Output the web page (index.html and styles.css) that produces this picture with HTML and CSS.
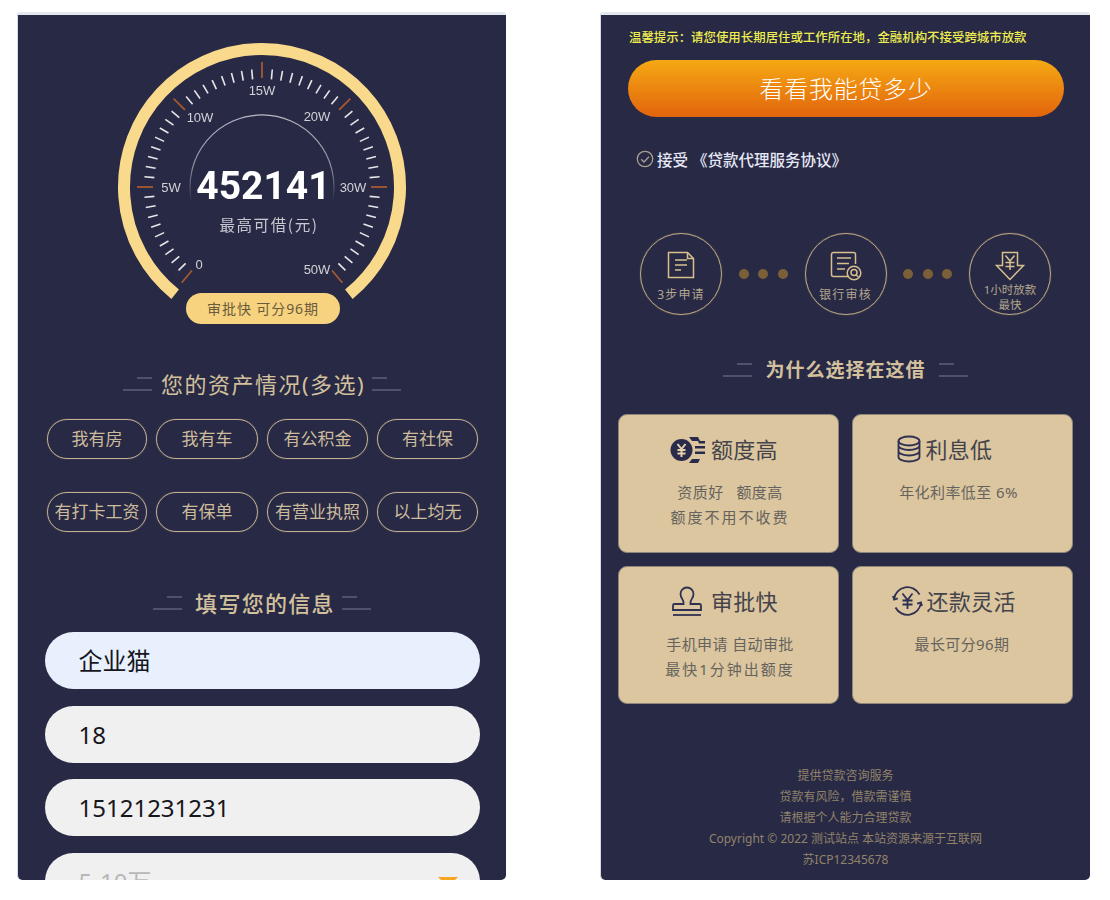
FILE: index.html
```html
<!DOCTYPE html>
<html lang="zh-CN">
<head>
<meta charset="utf-8">
<title>贷款申请</title>
<link rel="stylesheet" href="styles.css">
</head>
<body>
<main class="page">
  <section class="panel panel-left">
    <div class="gauge">
      <svg class="gauge-svg" width="320" height="300" viewBox="0 0 320 300">
        <defs>
          <linearGradient id="fade" gradientUnits="userSpaceOnUse" x1="0" y1="85" x2="0" y2="172">
            <stop offset="0" stop-color="#b9bac4"/>
            <stop offset="0.6" stop-color="#8d8e9c"/>
            <stop offset="1" stop-color="#282945"/>
          </linearGradient>
          <line id="m" class="tick" x1="0" y1="-118" x2="0" y2="-108"/>
          <line id="j" class="tick-major" x1="0" y1="-125" x2="0" y2="-109"/>
        </defs>
        <path class="rim" d="M73.15 264.25A138 138 0 1 1 246.85 264.25"/>
        <path class="inner-arc" d="M89.1 169.5A72 72 0 1 1 230.9 169.5"/>
        <g transform="translate(160 157)">
          <use href="#j" transform="rotate(-140)"/><use href="#m" transform="rotate(-135)"/><use href="#m" transform="rotate(-130)"/><use href="#m" transform="rotate(-125)"/><use href="#m" transform="rotate(-120)"/><use href="#m" transform="rotate(-115)"/><use href="#m" transform="rotate(-110)"/><use href="#m" transform="rotate(-105)"/><use href="#m" transform="rotate(-100)"/><use href="#m" transform="rotate(-95)"/>
          <use href="#j" transform="rotate(-90)"/><use href="#m" transform="rotate(-85)"/><use href="#m" transform="rotate(-80)"/><use href="#m" transform="rotate(-75)"/><use href="#m" transform="rotate(-70)"/><use href="#m" transform="rotate(-65)"/><use href="#m" transform="rotate(-60)"/><use href="#m" transform="rotate(-55)"/><use href="#m" transform="rotate(-50)"/>
          <use href="#j" transform="rotate(-45)"/><use href="#m" transform="rotate(-40)"/><use href="#m" transform="rotate(-35)"/><use href="#m" transform="rotate(-30)"/><use href="#m" transform="rotate(-25)"/><use href="#m" transform="rotate(-20)"/><use href="#m" transform="rotate(-15)"/><use href="#m" transform="rotate(-10)"/><use href="#m" transform="rotate(-5)"/>
          <use href="#j"/><use href="#m" transform="rotate(5)"/><use href="#m" transform="rotate(10)"/><use href="#m" transform="rotate(15)"/><use href="#m" transform="rotate(20)"/><use href="#m" transform="rotate(25)"/><use href="#m" transform="rotate(30)"/><use href="#m" transform="rotate(35)"/><use href="#m" transform="rotate(40)"/>
          <use href="#j" transform="rotate(45)"/><use href="#m" transform="rotate(50)"/><use href="#m" transform="rotate(55)"/><use href="#m" transform="rotate(60)"/><use href="#m" transform="rotate(65)"/><use href="#m" transform="rotate(70)"/><use href="#m" transform="rotate(75)"/><use href="#m" transform="rotate(80)"/><use href="#m" transform="rotate(85)"/>
          <use href="#j" transform="rotate(90)"/><use href="#m" transform="rotate(95)"/><use href="#m" transform="rotate(100)"/><use href="#m" transform="rotate(105)"/><use href="#m" transform="rotate(110)"/><use href="#m" transform="rotate(115)"/><use href="#m" transform="rotate(120)"/><use href="#m" transform="rotate(125)"/><use href="#m" transform="rotate(130)"/><use href="#m" transform="rotate(135)"/>
          <use href="#j" transform="rotate(140)"/>
        </g>
        <text class="scale" x="160" y="65">15W</text>
        <text class="scale" x="98" y="92">10W</text>
        <text class="scale" x="215" y="91">20W</text>
        <text class="scale" x="69" y="162">5W</text>
        <text class="scale" x="251" y="162">30W</text>
        <text class="scale" x="97" y="239">0</text>
        <text class="scale" x="215" y="244">50W</text>
        <text class="amount" x="161.500" y="169">452141</text>
        <text class="amount-label" x="167" y="201">最高可借(元)</text>
      </svg>
      <div class="gauge-pill">审批快 可分96期</div>
    </div>

    <h2 class="heading heading-assets"><i class="deco deco-l"></i><span class="heading-assets-text">您的资产情况(多选)</span><i class="deco deco-r"></i></h2>
    <div class="chips">
      <div class="chip">我有房</div>
      <div class="chip">我有车</div>
      <div class="chip">有公积金</div>
      <div class="chip">有社保</div>
      <div class="chip">有打卡工资</div>
      <div class="chip">有保单</div>
      <div class="chip">有营业执照</div>
      <div class="chip">以上均无</div>
    </div>

    <h2 class="heading heading-info"><i class="deco deco-l"></i><span class="heading-info-text">填写您的信息</span><i class="deco deco-r"></i></h2>
    <div class="fields">
      <div class="field field-filled">企业猫</div>
      <div class="field">18</div>
      <div class="field">15121231231</div>
      <div class="field field-select"><span class="placeholder">5-10万</span><i class="caret"></i></div>
    </div>
  </section>

  <section class="panel panel-right">
    <p class="notice">温馨提示：请您使用长期居住或工作所在地，金融机构不接受跨城市放款</p>
    <div class="cta">看看我能贷多少</div>
    <div class="agree">
      <svg class="agree-icon" width="18" height="18" viewBox="0 0 18 18"><circle cx="9" cy="9" r="7.7"/><path d="M5.2 9.2l2.8 2.8 5-5.2"/></svg>
      <span>接受&nbsp;《贷款代理服务协议》</span>
    </div>

    <div class="steps">
      <div class="step">
        <svg class="step-icon" width="28" height="28" viewBox="0 0 28 28"><path d="M1.5 1.5h19l6 6v19h-25z"/><path d="M20.5 1.5v6h6"/><path d="M8 9h12M8 14h12M8 19h6"/></svg>
        <span class="step-text step-text-one">3步申请</span>
      </div>
      <div class="dots"><i></i><i></i><i></i></div>
      <div class="step">
        <svg class="step-icon step-icon-search" width="32" height="30" viewBox="0 0 32 30"><path d="M19 25.5H3.500a2 2 0 0 1-2-2V3.500a2 2 0 0 1 2-2h20a2 2 0 0 1 2 2V13"/><path d="M7 7h14M7 12.500h12M7 18h8"/><circle cx="24" cy="22" r="6.800"/><circle cx="24" cy="21.500" r="3"/><path d="M26 24l2.500 2"/></svg>
        <span class="step-text step-text-two">银行审核</span>
      </div>
      <div class="dots"><i></i><i></i><i></i></div>
      <div class="step">
        <svg class="step-icon step-icon-arrow" width="30" height="30" viewBox="0 0 30 30"><path d="M7.500 1.500h15v13h6L15 28.500 1.500 14.500h6z"/><path d="M10.500 4.500l4.500 5.500 4.500-5.500M15 10v9M10.500 11.500h9M10.500 15.500h9"/></svg>
        <span class="step-text step-text-small">1小时放款<br>最快</span>
      </div>
    </div>

    <h2 class="heading heading-why"><i class="deco deco-l"></i><span>为什么选择在这借</span><i class="deco deco-r"></i></h2>

    <div class="cards">
      <article class="card">
        <div class="card-title title-limit">
          <svg class="card-icon" width="36" height="28" viewBox="0 0 36 28"><circle class="solid" cx="11.500" cy="14" r="11"/><path class="coin-mark" d="M7.500 8l4 5 4-5M11.500 13v8M7.500 14h8M7.500 17.500h8"/><path class="solid" d="M19 1h9l2 4h-8zM25 10h10v2.500H25zM25 15.500h10V18H25zM22 23h8l-2 4h-9zM28 5h7v2.500h-6z"/></svg>
          <span>额度高</span>
        </div>
        <p class="card-text card-text-right">资质好&nbsp;&nbsp;&nbsp;额度高<br><span class="line-wide">额度不用不收费</span></p>
      </article>
      <article class="card">
        <div class="card-title title-rate">
          <svg class="card-icon card-icon-line" width="24" height="30" viewBox="0 0 24 30"><ellipse cx="12" cy="6" rx="10.500" ry="4.500"/><path d="M1.500 6v4.500c0 2.500 4.700 4.500 10.500 4.500s10.500-2 10.500-4.500V6M1.500 10.500V16c0 2.500 4.700 4.500 10.500 4.500s10.500-2 10.500-4.500v-5.500M1.500 16v6c0 2.500 4.700 4.500 10.500 4.500s10.500-2 10.500-4.500v-6"/></svg>
          <span>利息低</span>
        </div>
        <p class="card-text card-text-left">年化利率低至 6%</p>
      </article>
      <article class="card">
        <div class="card-title title-approve">
          <svg class="card-icon card-icon-line" width="30" height="31" viewBox="0 0 30 31"><path d="M11.500 16.500c0-3-3-4.500-3-8.500a6.500 6.500 0 0 1 13 0c0 4-3 5.500-3 8.500v1.500h9c.8 0 1.500.7 1.500 1.500v4.500H1v-4.500c0-.8.700-1.500 1.500-1.500h9z"/><path d="M1 29h28"/></svg>
          <span>审批快</span>
        </div>
        <p class="card-text card-text-right">手机申请 自动审批<br><span class="line-wide">最快1分钟出额度</span></p>
      </article>
      <article class="card">
        <div class="card-title title-repay">
          <svg class="card-icon card-icon-line" width="31" height="30" viewBox="0 0 31 30"><path d="M2.100 13A13.500 13.500 0 0 1 27.500 8.500M28.900 17A13.500 13.500 0 0 1 3.500 21.500"/><path d="M1 10l1.100 3.500 3.700-1.200M30 20l-1.100-3.500-3.700 1.200"/><path d="M10.500 7.500l5 6.500 5-6.500M15.500 14v9M10.500 14.500h10M10.500 18.500h10"/></svg>
          <span>还款灵活</span>
        </div>
        <p class="card-text">最长可分96期</p>
      </article>
    </div>

    <footer class="footer">
      <p>提供贷款咨询服务</p>
      <p>贷款有风险，借款需谨慎</p>
      <p>请根据个人能力合理贷款</p>
      <p>Copyright © 2022 测试站点 本站资源来源于互联网</p>
      <p>苏ICP12345678</p>
    </footer>
  </section>
</main>
</body>
</html>
```
FILE: styles.css
```css
* { box-sizing: border-box; }
html, body { margin: 0; padding: 0; background: #fff; }
body { height: 900px; overflow: hidden; font-family: "Noto Sans", "Noto Sans CJK SC", sans-serif; }
p, h2 { margin: 0; }
i { font-style: normal; }

.page { display: flex; gap: 94px; padding: 12px 0 0 17px; height: 880px; }
.panel {
  height: 868px;
  overflow: hidden;
  background: #282945;
  border-top: 3px solid #e3e7f0;
  border-left: 1px solid #d5dbe6;
  border-radius: 3px 3px 5px 5px;
}
.panel-left { width: 489px; }
.panel-right { width: 490px; }

/* gauge */
.gauge { position: relative; height: 310px; padding-top: 15px; }
.gauge-svg { display: block; margin: 0 auto; filter: blur(.35px); }
.rim { fill: none; stroke: #f9d98b; stroke-width: 12; }
.inner-arc { fill: none; stroke: url(#fade); stroke-width: 1.2; }
.tick { stroke: #e6e6ea; stroke-width: 1.6; }
.tick-major { stroke: #a5592f; stroke-width: 1.8; }
.scale { fill: #d2d2d8; font: 13px "Liberation Sans", sans-serif; text-anchor: middle; }
.amount { fill: #fff; font: 700 39px Roboto, sans-serif; text-anchor: middle; }
.amount-label { fill: #c8c8d0; font: 15.500px "Noto Sans CJK SC", sans-serif; letter-spacing: 1.600px; text-anchor: middle; }
.gauge-pill {
  position: absolute;
  left: 168px;
  top: 278px;
  width: 154px;
  height: 31px;
  line-height: 31px;
  border-radius: 16px;
  text-align: center;
  font-size: 14px;
  letter-spacing: .9px;
  color: #6a5b3c;
  background: #f7d27f;
}

/* headings */
.heading {
  display: flex;
  align-items: center;
  justify-content: center;
  height: 30px;
  font-size: 22px;
  font-weight: 500;
  letter-spacing: 1px;
  line-height: 30px;
  color: #d3c09c;
}
.heading-assets { gap: 9px; margin-top: 44px; font-weight: 400; letter-spacing: 1.500px; }
.heading-assets-text { margin-right: -2px; }
.heading-info { gap: 8px; margin-top: 56px; letter-spacing: 1.300px; }
.heading-info-text { margin: 0 -1px 0 5px; }
.heading-why { gap: 13px; margin-top: 40px; font-size: 19px; font-weight: 700; }
.deco { position: relative; display: block; width: 29px; height: 14px; border-bottom: 2px solid #50516a; }
.deco::before { content: ""; position: absolute; top: 0; width: 15px; height: 2px; background: #50516a; }
.deco-l::before { right: 0; }
.deco-r::before { left: 0; }

/* chips */
.chips {
  display: grid;
  grid-template-columns: 100px 102px 101px 101px;
  column-gap: 9px;
  row-gap: 33px;
  margin: 20px 0 0 29px;
}
.chip {
  height: 40px;
  line-height: 37px;
  text-align: center;
  font-size: 17px;
  color: #cdbc9c;
  border: 1px solid #c4b294;
  box-shadow: 0 0 1px #a39379;
  border-radius: 20px;
  white-space: nowrap;
}

/* form */
.fields { display: flex; flex-direction: column; gap: 16.500px; margin: 14px 0 0 26.500px; width: 435.500px; }
.field {
  position: relative;
  flex: none;
  height: 57px;
  line-height: 57px;
  padding-left: 34px;
  font-size: 24px;
  color: #16161c;
  background: #f0f0f0;
  border-radius: 28.500px;
}
.field-filled { background: #e8f0fe; }
.placeholder { color: #b8b8b8; }
.caret {
  position: absolute;
  right: 22px;
  top: 24px;
  border-style: solid;
  border-width: 10px 10px 0;
  border-color: #f5a623 transparent transparent;
}

/* right panel */
.notice {
  margin: 13px 0 0 28px;
  font-size: 12.430px;
  line-height: 20px;
  font-weight: 500;
  color: #eeee50;
  white-space: nowrap;
}
.cta {
  width: 436px;
  height: 57px;
  margin: 12px 0 0 27px;
  border-radius: 28.500px;
  background: linear-gradient(#f5a913, #e2640d);
  color: #fff;
  font-size: 24px;
  letter-spacing: .7px;
  line-height: 57px;
  text-align: center;
  font-weight: 300;
}
.agree {
  display: flex;
  align-items: center;
  gap: 3px;
  height: 24px;
  margin: 30px 0 0 35px;
  font-size: 15.500px;
  font-weight: 500;
  color: #e6e8f5;
}
.agree-icon { fill: none; stroke: #a89f90; stroke-width: 1.300; }

.steps {
  display: flex;
  align-items: center;
  width: 411px;
  margin: 62px 0 0 39px;
}
.step {
  display: flex;
  flex: none;
  flex-direction: column;
  align-items: center;
  width: 82px;
  height: 82px;
  padding-top: 17px;
  border: 1px solid #c0aa84;
  box-shadow: 0 0 1px #a3906f;
  border-radius: 50%;
}
.step-icon { flex: none; fill: none; stroke: #d8c08e; stroke-width: 1.500; }
.step-icon-search { margin-left: 1px; }
.step-text { font-size: 12px; line-height: 16px; letter-spacing: 1.200px; color: #b2a68f; white-space: nowrap; text-align: center; }
.step-text-one { margin-top: 8px; }
.step-text-two { margin-top: 6px; }
.step-text-small { margin-top: 1px; font-size: 11.500px; line-height: 15px; letter-spacing: 0; }
.dots { flex: 1; display: flex; justify-content: center; gap: 9.500px; }
.dots i { width: 10px; height: 10px; border-radius: 50%; background: #7a5f38; }

.cards {
  display: grid;
  grid-template-columns: 221px 221px;
  grid-auto-rows: 138.500px;
  column-gap: 12.500px;
  row-gap: 13px;
  margin: 29px 0 0 17px;
}
.card {
  background: #dbc6a0;
  border: 1px solid #8e8578;
  border-radius: 9px;
  padding-top: 18px;
  color: #5c5a56;
}
.card-title { display: flex; align-items: center; gap: 6px; height: 33px; font-size: 22px; letter-spacing: .3px; color: #44434a; line-height: 33px; white-space: nowrap; }
.title-limit { padding-left: 51px; gap: 5px; }
.title-rate { padding-left: 44px; gap: 5px; }
.title-approve { padding-left: 53px; gap: 9px; }
.title-repay { padding-left: 39px; gap: 4px; }
.card-icon { flex: none; }
.card-icon-line { fill: none; stroke: #2f3052; stroke-width: 1.800; }
.solid { fill: #2a2b4a; }
.coin-mark { fill: none; stroke: #e5d3ae; stroke-width: 2; }
.card-text { margin-top: 14px; font-size: 15px; line-height: 25px; letter-spacing: .4px; text-align: center; color: #66635c; }
.card-text-right { padding-left: 3px; }
.card-text-left { padding-right: 7px; }
.line-wide { letter-spacing: 2px; }

.footer { margin-top: 61px; text-align: center; font-size: 12px; line-height: 21px; color: #918369; }
```
